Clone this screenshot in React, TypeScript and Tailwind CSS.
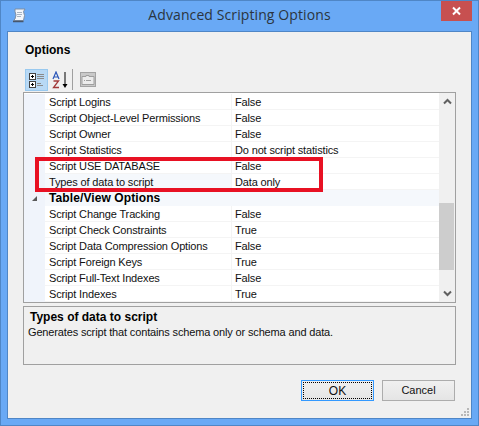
const FONT = "font-['Liberation_Sans',Arial,sans-serif]";

type Row = { name: string; value?: string; group?: boolean; alt?: boolean };

const ROWS: Row[] = [
  { name: "Script Logins", value: "False" },
  { name: "Script Object-Level Permissions", value: "False" },
  { name: "Script Owner", value: "False" },
  { name: "Script Statistics", value: "Do not script statistics" },
  { name: "Script USE DATABASE", value: "False" },
  { name: "Types of data to script", value: "Data only", alt: true },
  { name: "Table/View Options", group: true },
  { name: "Script Change Tracking", value: "False" },
  { name: "Script Check Constraints", value: "True" },
  { name: "Script Data Compression Options", value: "False" },
  { name: "Script Foreign Keys", value: "True" },
  { name: "Script Full-Text Indexes", value: "False" },
  { name: "Script Indexes", value: "True" },
];

function ScrollIcon() {
  return (
    <svg width="15" height="15" viewBox="0 0 15 15" className="shrink-0">
      <path d="M3 1h10l-1.500 2.500 1 4-1 5H1.500l1.500-1.500 1-4-1-3.500z" fill="#f3f6fb" stroke="#7f8ea3" />
      <path d="M1 13.500h10.500" stroke="#46566c" strokeWidth="1.500" />
      <path d="M5 4.500h5M5 6.500h5M5 8.500h4" stroke="#a7b3c2" />
    </svg>
  );
}

function CategorizedIcon() {
  return (
    <svg width="16" height="16" viewBox="0 0 16 16">
      <rect x="0.500" y="1.500" width="6" height="6" fill="#fff" stroke="#444" />
      <rect x="0.500" y="9.500" width="6" height="6" fill="#fff" stroke="#444" />
      <path d="M2 4.500h3M3.500 3v3M2 12.500h3M3.500 11v3" stroke="#000" />
      <path d="M8 2.500h7M8 4.500h7M8 6.500h7M8 11.500h4M8 13.500h6" stroke="#8a8a8a" />
    </svg>
  );
}

function SortIcon() {
  return (
    <svg width="16" height="18" viewBox="0 0 16 18">
      <path d="M1 8l3-7 3 7M2.300 6h3.400" fill="none" stroke="#2b56b8" strokeWidth="1.200" />
      <path d="M1.500 10h5l-5 6.500h5.500" fill="none" stroke="#a23a3a" strokeWidth="1.300" />
      <path d="M13 1v14" stroke="#000" />
      <path d="M10.500 13h5L13 17z" fill="#000" />
    </svg>
  );
}

function PagesIcon() {
  return (
    <svg width="16" height="16" viewBox="0 0 16 16">
      <rect x="0.500" y="0.500" width="15" height="14" fill="#c9c9c9" stroke="#a3a3a3" />
      <path d="M2 4.500h4v-1h3v1h5v8H2z" fill="#ececec" stroke="#9e9e9e" />
      <path d="M4 8.500h1M6 8.500h5" stroke="#9e9e9e" />
    </svg>
  );
}

function GridRow({ row }: { row: Row }) {
  if (row.group) {
    return (
      <div className="flex h-4 items-center bg-[#f5f8fc]">
        <div className="flex h-full w-[21px] shrink-0 items-center justify-center bg-[#f0f4fb]">
          <svg width="7" height="7" viewBox="0 0 7 7" className="ml-[-1px]">
            <path d="M6 1v5H1z" fill="#595959" />
          </svg>
        </div>
        <span className="pl-[4px] text-[12px] font-bold tracking-[0.1px] text-black">{row.name}</span>
      </div>
    );
  }
  return (
    <div className="flex h-4 bg-white text-[11px] tracking-[-0.15px]">
      <div className="w-[21px] shrink-0 bg-[#f0f4fb]" />
      <div className={`flex w-[186px] shrink-0 items-center border-b border-[#f4f4f4] pl-[4px] pt-[1px] ${row.alt ? "bg-[#f5f8fc]" : ""}`}>
        {row.name}
      </div>
      <div className="flex flex-1 items-center border-b border-l border-[#f4f4f4] pl-[3px] pt-[1px]">
        {row.value}
      </div>
    </div>
  );
}

export default function App() {
  return (
    <div className={`${FONT} flex h-[426px] w-[479px] flex-col overflow-hidden border border-[#4f86c6] bg-[#69a9f5] text-[12px] leading-none text-[#111]`}>
      <div className="relative flex h-[30px] shrink-0 items-center justify-center pb-[2px]">
        <div className="absolute left-[11px] top-[7px]">
          <ScrollIcon />
        </div>
        <span className="font-['Open_Sans',sans-serif] text-[14px] tracking-[0.1px] text-[#2b3540]">Advanced Scripting Options</span>
        <div className="absolute right-[6px] top-0 flex h-5 w-[31px] items-center justify-center bg-[#c75050]">
          <svg width="11" height="10" viewBox="0 0 11 10">
            <path d="M2 1.500l7 7M9 1.500l-7 7" stroke="#fff" strokeWidth="2" />
          </svg>
        </div>
      </div>

      <div className="relative mx-[6px] mb-[6px] flex flex-1 flex-col border border-[#4f86c6] bg-[#f0f0f0] px-[15px]">
        <div className="pl-[2px] pt-[12px] text-[12px] font-bold text-black">Options</div>

        <div className="ml-[2px] mt-[12px] flex h-[23px] items-center">
          <div className="flex h-[22px] w-[23px] items-center justify-center border border-[#99c9ef] bg-[#b8d9f5]">
            <CategorizedIcon />
          </div>
          <div className="ml-[2px] flex w-[20px] justify-center">
            <SortIcon />
          </div>
          <div className="mx-[2px] h-[21px] w-px bg-[#a0a0a0]" />
          <div className="ml-[5px]">
            <PagesIcon />
          </div>
        </div>

        <div className="relative mt-[1px] flex h-[211px] border border-[#a0a0a0] bg-white">
          <div className="w-[415px] shrink-0 overflow-hidden border-t border-white">
            {ROWS.map((row) => (
              <GridRow key={row.name} row={row} />
            ))}
          </div>
          <div className="flex flex-1 flex-col bg-[#f0f0f0]">
            <div className="flex h-[17px] items-center justify-center">
              <svg width="9" height="7" viewBox="0 0 9 7">
                <path d="M1 5.500l3.500-3.500 3.500 3.500" fill="none" stroke="#606060" strokeWidth="2" />
              </svg>
            </div>
            <div className="mr-[1px] mt-[93px] h-[67px] bg-[#cdcdcd]" />
            <div className="mt-auto flex h-[17px] items-center justify-center">
              <svg width="9" height="7" viewBox="0 0 9 7">
                <path d="M1 1.500l3.500 3.500 3.500-3.500" fill="none" stroke="#606060" strokeWidth="2" />
              </svg>
            </div>
          </div>
        </div>

        <div className="mt-[3px] h-[59px] border border-[#a0a0a0] px-[4px] pt-[4px]">
          <div className="pl-[2px] font-bold text-black">Types of data to script</div>
          <div className="mt-[2px] text-[11px] leading-[14px] tracking-[-0.15px]">Generates script that contains schema only or schema and data.</div>
        </div>

        <div className="mt-[15px] flex justify-end gap-[8px] pr-[1px]">
          <button className="relative h-[21px] w-[73px] border border-[#3399ff] bg-gradient-to-b from-[#f0f0f0] to-[#e5e5e5] text-[12px]">
            <span className="absolute inset-[1px] flex items-center justify-center border border-dotted border-black">OK</span>
          </button>
          <button className="h-[21px] w-[73px] border border-[#acacac] bg-gradient-to-b from-[#f0f0f0] to-[#e5e5e5] text-[11px]">
            Cancel
          </button>
        </div>

        <svg width="9" height="9" viewBox="0 0 9 9" className="absolute bottom-[1px] right-[1px]">
          <path d="M6 0h2v2H6zM3 3h2v2H3zM6 3h2v2H6zM0 6h2v2H0zM3 6h2v2H3zM6 6h2v2H6z" fill="#b8b8b8" />
        </svg>

        {/* annotation over the grid */}
        <div className="absolute left-[27px] top-[125px] h-[35px] w-[288px] border-[4px] border-[#e81123]" />
      </div>
    </div>
  );
}
